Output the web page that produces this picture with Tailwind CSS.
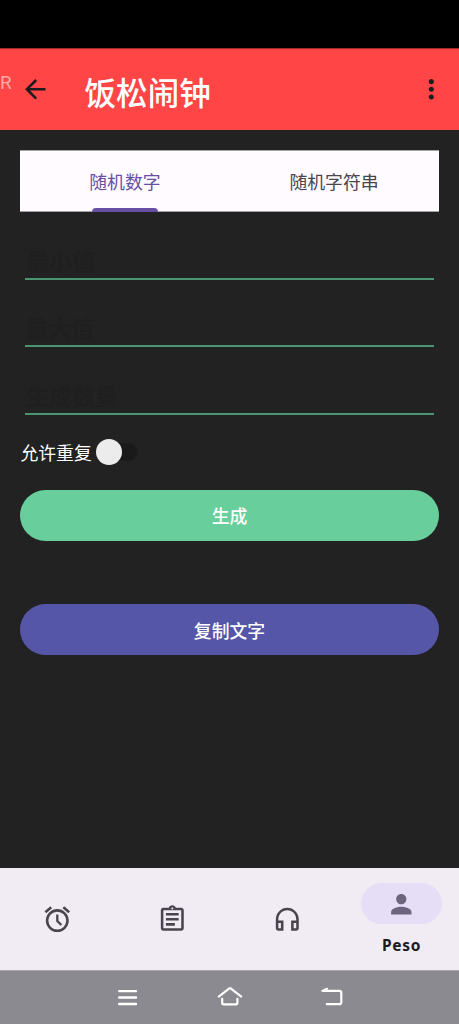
<!DOCTYPE html>
<html lang="zh-CN">
<head>
<meta charset="utf-8">
<title>饭松闹钟</title>
<script src="https://cdn.jsdelivr.net/npm/@tailwindcss/browser@4"></script>
</head>
<body class="w-[459px] h-[1024px] overflow-hidden bg-[#222222] flex flex-col font-['Noto_Sans_CJK_SC',sans-serif]">
<div class="h-12 shrink-0 bg-black"></div>
<header class="h-[82px] shrink-0 bg-[#ff4545] border-t border-t-[#a02c2c] flex items-center relative">
  <span class="absolute left-0 top-[22px] text-[19px] leading-6 text-[#ffa8a8] font-['Roboto',sans-serif]">R</span>
  <svg class="w-[30.6px] h-[30.6px] ml-[19.7px] -mt-px" viewBox="0 0 24 24" fill="#1d1b20"><path d="M20 11H7.83l5.59-5.59L12 4l-8 8 8 8 1.41-1.41L7.83 13H20z"/></svg>
  <h1 class="ml-[34.2px] mt-0.5 text-[31.6px] leading-10 font-medium text-white">饭松闹钟</h1>
  <svg class="w-[30.6px] h-[30.6px] ml-auto mr-[12.7px]" viewBox="0 0 24 24" fill="#1d1b20"><path d="M12 8c1.1 0 2-.9 2-2s-.9-2-2-2-2 .9-2 2 .9 2 2 2zm0 2c-1.1 0-2 .9-2 2s.9 2 2 2 2-.9 2-2-.9-2-2-2zm0 6c-1.1 0-2 .9-2 2s.9 2 2 2 2-.9 2-2-.9-2-2-2z"/></svg>
</header>
<main class="flex-1 px-[20.4px] pt-[20.4px] flex flex-col">
  <div class="h-[61.2px] bg-[#fffbff] border-y border-[#a5a3a5] grid grid-cols-2 text-[17.85px] leading-6 shrink-0">
    <div class="flex flex-col items-center text-[#6750a4]">
      <span class="mt-[17.5px]">随机数字</span>
      <i class="mt-auto -mb-px w-[66px] h-[4px] rounded-t-[4px] bg-[#6750a4]"></i>
    </div>
    <div class="flex flex-col items-center text-[#49454f]"><span class="mt-[17.5px]">随机字符串</span></div>
  </div>
  <div class="mx-[5px] h-[68.4px] border-b-2 border-[#4c9574] pt-[33px] pl-px text-[22.9px] leading-[30px] font-bold text-[#1f1f1f] shrink-0">最小值</div>
  <div class="mx-[5px] h-[66.6px] border-b-2 border-[#4c9574] pt-[32px] text-[22.9px] leading-[30px] font-bold text-[#1f1f1f] shrink-0">最大值</div>
  <div class="mx-[5px] h-[68.4px] border-b-2 border-[#4c9574] pt-[33px] pl-px text-[22.9px] leading-[30px] font-bold text-[#1f1f1f] shrink-0">生成数量</div>
  <div class="h-[74.6px] shrink-0 flex items-center text-white text-[17.85px] leading-6">
    <span>允许重复</span>
    <span class="ml-[7px] w-[38px] h-[18px] rounded-full bg-[#1a1a1a] flex items-center"><i class="-ml-[3px] w-[26px] h-[26px] rounded-full bg-[#ececec] shrink-0"></i></span>
  </div>
  <button class="h-[51px] shrink-0 rounded-full bg-[#68ce9b] text-white text-[17.85px] font-medium leading-6">生成</button>
  <button class="mt-[63.5px] h-[51px] shrink-0 rounded-full bg-[#5656a9] text-white text-[17.85px] font-medium leading-6">复制文字</button>
</main>
<nav class="h-[102px] shrink-0 bg-[#f1ebf4] grid grid-cols-4 justify-items-center items-center">
  <svg class="w-[30.6px] h-[30.6px]" viewBox="0 0 24 24" fill="#49454f"><path d="m22 5.72-4.6-3.86-1.29 1.53 4.6 3.86zM7.88 3.39 6.6 1.86 2 5.71l1.29 1.53zM12 4a9 9 0 1 0 0 18 9 9 0 0 0 0-18zm0 16a7 7 0 1 1 0-14 7 7 0 0 1 0 14z"/><path d="M12 8.2V13.3L15.2 16.5" fill="none" stroke="#49454f" stroke-width="1.8"/></svg>
  <svg class="w-[30.6px] h-[30.6px]" viewBox="0 0 24 24" fill="#49454f"><path d="M7 15h7v2H7zm0-4h10v2H7zm0-4h10v2H7zm12-4h-4.18C14.4 1.84 13.3 1 12 1c-1.3 0-2.4.84-2.82 2H5c-1.1 0-2 .9-2 2v14c0 1.1.9 2 2 2h14c1.1 0 2-.9 2-2V5c0-1.1-.9-2-2-2zm-7-.25c.41 0 .75.34.75.75s-.34.75-.75.75-.75-.34-.75-.75.34-.75.75-.75zM19 19H5V5h14v14z"/></svg>
  <svg class="w-[30.6px] h-[30.6px]" viewBox="0 0 24 24" fill="#49454f"><path d="M12 3a9 9 0 0 0-9 9v7c0 1.1.9 2 2 2h4v-8H5v-1c0-3.87 3.13-7 7-7s7 3.13 7 7v1h-4v8h4c1.1 0 2-.9 2-2v-7a9 9 0 0 0-9-9zM7 15v4H5v-4h2zm12 4h-2v-4h2v4z"/></svg>
  <div class="flex flex-col items-center self-start pt-[15.4px]">
    <span class="w-[81.6px] h-[41px] rounded-full bg-[#e6def6] flex items-center justify-center">
      <svg class="w-[30.6px] h-[30.6px]" viewBox="0 0 24 24" fill="#6d657f"><path d="M12 12c2.21 0 4-1.79 4-4s-1.79-4-4-4-4 1.79-4 4 1.79 4 4 4zm0 2c-2.67 0-8 1.34-8 4v2h16v-2c0-2.66-5.33-4-8-4z"/></svg>
    </span>
    <span class="mt-[11px] text-[15.5px] leading-5 tracking-[0.7px] font-bold text-[#1d1b20] font-['Noto_Sans',sans-serif]">Peso</span>
  </div>
</nav>
<footer class="h-[54px] shrink-0 bg-[#8b8a90] border-t border-[#a9a7ac] flex items-center justify-center gap-[78px] text-white">
  <svg class="w-6 h-6" viewBox="0 0 24 24" fill="none" stroke="currentColor" stroke-width="2.4" stroke-linecap="round"><path d="M3.2 5.1h16.8M3.2 11.5h16.8M3.2 18h16.8"/></svg>
  <svg class="w-6 h-6 overflow-visible" viewBox="0 0 24 24" fill="none" stroke="currentColor" stroke-width="2.2" stroke-linecap="round" stroke-linejoin="round"><path d="M.8 10.6 11 2.6Q12 1.8 13 2.6L23.2 10.6M4.2 12.8v4q0 1.5 1.5 1.5h12.2q1.5 0 1.5-1.5v-4"/></svg>
  <svg class="w-6 h-6" viewBox="0 0 24 24" fill="none" stroke="currentColor" stroke-width="2.2" stroke-linecap="round" stroke-linejoin="round"><path d="M7 2.8 2.4 4.9H19.3q2 0 2 2v9.3q0 2-2 2H6.8"/><path d="M7 2.8v2.1H2.4z" fill="currentColor" stroke="none"/></svg>
</footer>
</body>
</html>
